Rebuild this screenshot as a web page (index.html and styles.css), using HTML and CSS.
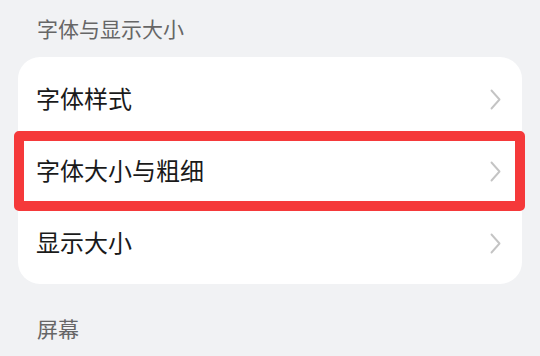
FILE: index.html
```html
<!DOCTYPE html>
<html lang="zh-CN">
<head>
    <meta charset="UTF-8">
    <meta name="viewport" content="width=device-width, initial-scale=1.0">
    <title>字体与显示大小</title>
    <link rel="stylesheet" href="styles.css">
</head>
<body>
    <div class="section-title">字体与显示大小</div>

    <div class="card">
        <div class="row">
            <span class="row-label">字体样式</span>
            <svg class="chevron" width="11" height="21" viewBox="0 0 11 21"><path d="M1.5 1.5 L9.5 10.5 L1.5 19.5"/></svg>
        </div>
        <div class="row">
            <span class="row-label">字体大小与粗细</span>
            <svg class="chevron" width="11" height="21" viewBox="0 0 11 21"><path d="M1.5 1.5 L9.5 10.5 L1.5 19.5"/></svg>
            <div class="highlight"></div> <!-- красная рамка выделения -->
        </div>
        <div class="row">
            <span class="row-label">显示大小</span>
            <svg class="chevron" width="11" height="21" viewBox="0 0 11 21"><path d="M1.5 1.5 L9.5 10.5 L1.5 19.5"/></svg>
        </div>
    </div>

    <div class="section-title section-title-next">屏幕</div>
</body>
</html>
```

FILE: styles.css
```css
body {
    font-family: "Noto Sans CJK SC", "Noto Sans", sans-serif;
    margin: 0;
    padding: 0;
    background-color: #f1f2f4;
}

.section-title {
    padding: 14px 0 0 37px;
    font-size: 21px;
    line-height: 28px;
    color: #666666;
}

.section-title-next {
    padding-top: 0;
    margin-top: 30px;
}

.card {
    margin: 15px 18px 0;
    padding: 6px 0 5px;
    background-color: #fff;
    border-radius: 22px;
}

.row {
    position: relative;
    height: 72px;
    display: flex;
    align-items: center;
    justify-content: space-between;
    padding: 0 21px 0 18px;
}

.row-label {
    font-size: 24px;
    line-height: 30px;
    margin-top: -3px;
    color: #1a1a1a;
}

.chevron path {
    fill: none;
    stroke: #c4c4c4;
    stroke-width: 1.9;
    stroke-linecap: round;
    stroke-linejoin: round;
}

.highlight {
    position: absolute;
    top: -4px;
    left: -4px;
    right: -3px;
    bottom: -4px;
    border: 10px solid #f5393a;
    border-radius: 5px;
}
```
